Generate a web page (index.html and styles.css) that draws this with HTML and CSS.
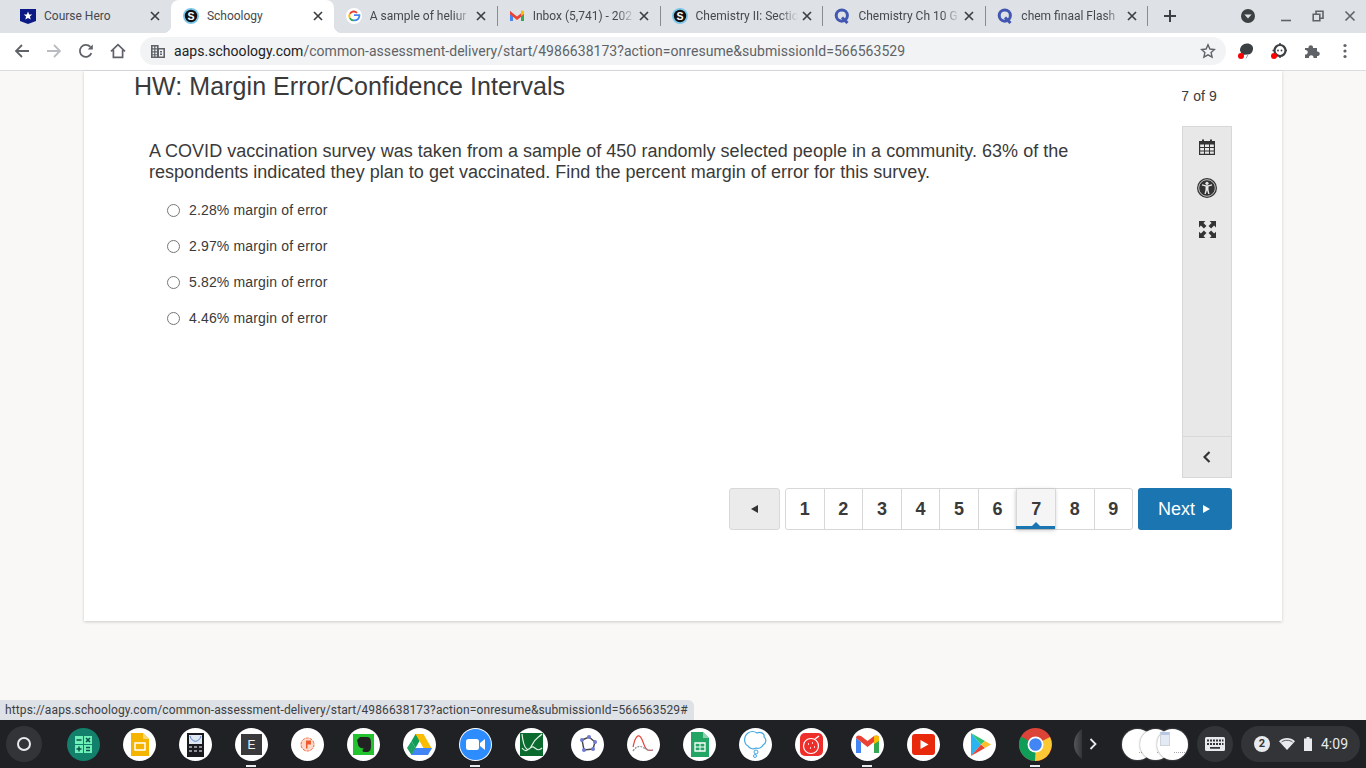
FILE: index.html
```html
<!DOCTYPE html>
<html lang="en">
<head>
    <meta charset="UTF-8">
    <title>Schoology</title>
    <link rel="stylesheet" href="styles.css">
</head>
<body>
    <svg class="defs" width="0" height="0">
        <symbol id="fav-q" viewBox="0 0 16 16">
            <circle cx="7.800" cy="7.600" r="5.600" fill="none" stroke="#4257b2" stroke-width="3"/>
            <path d="M8 9.500l5.500 5.500" stroke="#4257b2" stroke-width="3"/>
        </symbol>
        <symbol id="close" viewBox="0 0 10 10">
            <path d="M1 1l8 8M9 1l-8 8" stroke="#3c4043" stroke-width="1.700" fill="none"/>
        </symbol>
    </svg>

    <!-- browser chrome -->
    <div class="tabstrip">
        <div class="tab">
            <svg class="favicon" viewBox="0 0 16 16"><path d="M0 1h16v12l-8 3-8-3z" fill="#0b1a85"/><path d="M8 3.500l1.200 2.900 3 .2-2.300 2 .8 3L8 10l-2.700 1.600.8-3-2.300-2 3-.2z" fill="#fff"/></svg>
            <span class="tab-title short">Course Hero</span>
            <svg class="tab-close"><use href="#close"/></svg>
        </div>
        <div class="tab active">
            <svg class="favicon" viewBox="0 0 16 16"><circle cx="8" cy="8" r="8" fill="#7cc8ea"/><circle cx="8" cy="8" r="6.200" fill="#111"/><text x="8" y="11.600" font-family="Liberation Sans" font-weight="700" font-size="10.500" text-anchor="middle" fill="#fff">S</text></svg>
            <span class="tab-title short">Schoology</span>
            <svg class="tab-close"><use href="#close"/></svg>
        </div>
        <div class="tab">
            <svg class="favicon" viewBox="0 0 16 16">
                <circle cx="8" cy="8" r="8" fill="#fff"/>
                <path d="M8 7.100h5.400c.3 2.800-1.700 5.300-5.400 5.300" fill="none" stroke="#4285f4" stroke-width="1.900"/>
                <path d="M3.900 5.800A4.500 4.500 0 0 1 11 4.800" fill="none" stroke="#ea4335" stroke-width="1.900"/>
                <path d="M3.800 10.100a4.600 4.600 0 0 1 0-4.300" fill="none" stroke="#fbbc05" stroke-width="1.900"/>
                <path d="M3.800 10.100a4.500 4.500 0 0 0 4.200 2.300" fill="none" stroke="#34a853" stroke-width="1.900"/>
            </svg>
            <span class="tab-title">A sample of heliur</span>
            <svg class="tab-close"><use href="#close"/></svg>
        </div>
        <div class="tab sep">
            <svg class="favicon" viewBox="0 0 16 16">
                <path d="M1 3v10h3V6z" fill="#4285f4"/><path d="M12 6v7h3V3z" fill="#34a853"/>
                <path d="M1 3l7 5.500L15 3v3.500L8 12 1 6.500z" fill="#ea4335"/><path d="M12 2.600L15 3v3l-3 2z" fill="#fbbc05"/>
            </svg>
            <span class="tab-title">Inbox (5,741) - 202</span>
            <svg class="tab-close"><use href="#close"/></svg>
        </div>
        <div class="tab sep">
            <svg class="favicon" viewBox="0 0 16 16"><circle cx="8" cy="8" r="8" fill="#7cc8ea"/><circle cx="8" cy="8" r="6.200" fill="#111"/><text x="8" y="11.600" font-family="Liberation Sans" font-weight="700" font-size="10.500" text-anchor="middle" fill="#fff">S</text></svg>
            <span class="tab-title">Chemistry II: Sectio</span>
            <svg class="tab-close"><use href="#close"/></svg>
        </div>
        <div class="tab sep">
            <svg class="favicon"><use href="#fav-q"/></svg>
            <span class="tab-title">Chemistry Ch 10 G</span>
            <svg class="tab-close"><use href="#close"/></svg>
        </div>
        <div class="tab sep">
            <svg class="favicon"><use href="#fav-q"/></svg>
            <span class="tab-title">chem finaal Flash</span>
            <svg class="tab-close"><use href="#close"/></svg>
        </div>
        <div class="tab-end">
            <svg class="new-tab" viewBox="0 0 12 12"><path d="M6 0v12M0 6h12" stroke="#3c4043" stroke-width="2"/></svg>
        </div>
        <div class="win-controls">
            <svg class="win-profile" viewBox="0 0 14 14"><circle cx="7" cy="7" r="7" fill="#3c4043"/><path d="M3.400 5.400h7.200L7 9.600z" fill="#dee1e6"/></svg>
            <svg class="win-btn" viewBox="0 0 12 12"><path d="M1 10.500h10" stroke="#5f6368" stroke-width="1.600"/></svg>
            <svg class="win-btn" viewBox="0 0 12 12"><path d="M4 4V1.200h7v7H8M1.200 4.200h6.600v6.600H1.200z" fill="none" stroke="#5f6368" stroke-width="1.600"/></svg>
            <svg class="win-btn" viewBox="0 0 12 12"><path d="M1.500 1.500l9 9M10.500 1.500l-9 9" stroke="#5f6368" stroke-width="1.600"/></svg>
        </div>
    </div>

    <div class="toolbar">
        <svg class="nav-icon" viewBox="0 0 16 16"><path d="M15 8H2M8 2L2 8l6 6" fill="none" stroke="#5f6368" stroke-width="1.800"/></svg>
        <svg class="nav-icon" viewBox="0 0 16 16"><path d="M1 8h13M8 2l6 6-6 6" fill="none" stroke="#b9bcc0" stroke-width="1.800"/></svg>
        <svg class="nav-icon" viewBox="0 0 16 16"><path d="M13.400 10.200A6 6 0 1 1 12.400 3.900" fill="none" stroke="#5f6368" stroke-width="1.800"/><path d="M9.600 6.600h5.200V1.400z" fill="#5f6368"/></svg>
        <svg class="nav-icon" viewBox="0 0 16 16"><path d="M1 8.400L8 1.600l7 6.800M3.400 7v7.400h9.200V7" fill="none" stroke="#5f6368" stroke-width="1.700"/></svg>
        <div class="omnibox">
            <svg class="site-icon" viewBox="0 0 14 14"><path d="M0 1h7.600v3H14v10H0z" fill="#5f6368"/><path d="M1.600 2.600h1.600v1.600H1.600zM4.400 2.600H6v1.600H4.400zM1.600 5.600h1.600v1.600H1.600zM4.400 5.600H6v1.600H4.400zM1.600 8.600h1.600v1.600H1.600zM4.400 8.600H6v1.600H4.400zM1.600 11.200h1.600v1.400H1.600zM4.400 11.200H6v1.400H4.400zM8 5.600h4.400v7H8z" fill="#f1f3f4"/><path d="M9 7h2v1.400H9zM9 9.600h2V11H9z" fill="#5f6368"/></svg>
            <span class="url"><b>aaps.schoology.com</b>/common-assessment-delivery/start/4986638173?action=onresume&amp;submissionId=566563529</span>
            <svg class="star" viewBox="0 0 16 16"><path d="M8 1.800l1.900 4.200 4.600.5-3.400 3.100 1 4.500-4.100-2.300-4.100 2.300 1-4.500L1.500 6.500l4.600-.5z" fill="none" stroke="#5f6368" stroke-width="1.400"/></svg>
        </div>
        <div class="extensions">
            <svg class="ext" viewBox="0 0 16 16"><path d="M2 7.500C2 3.500 5 .5 9 .5c4 0 6.500 2.500 6 6-.5 3-2.500 5-5.500 5L4 12z" fill="#3c4043"/><path d="M8 15.500l2-4" stroke="#9aa0a6"/><circle cx="3" cy="13" r="3" fill="#f00"/></svg>
            <svg class="ext" viewBox="0 0 16 16"><circle cx="9" cy="7.500" r="5.500" fill="none" stroke="#3c4043" stroke-width="2.200"/><path d="M9 0v3M9 12v3M1.500 7.500h2.500M14 7.500h2" stroke="#3c4043" stroke-width="1.500"/><circle cx="7" cy="7.500" r=".9" fill="#3c4043"/><circle cx="10.500" cy="7.500" r=".9" fill="#3c4043"/><circle cx="3" cy="13" r="3" fill="#f00"/></svg>
            <svg class="ext" viewBox="0 0 16 16"><path d="M1 5h3.500a2.300 2.300 0 1 1 4.500 0H13v3.500a2.300 2.300 0 1 1 0 4.500V15H9.500a2.300 2.300 0 1 0-4.500 0H1v-3.500a2.300 2.300 0 1 0 0-4.500z" fill="#5f6368"/></svg>
            <svg class="ext" viewBox="0 0 16 16"><circle cx="8" cy="2.500" r="1.600" fill="#5f6368"/><circle cx="8" cy="8" r="1.600" fill="#5f6368"/><circle cx="8" cy="13.500" r="1.600" fill="#5f6368"/></svg>
        </div>
    </div>

    <!-- page -->
    <div class="page">
        <main class="card">
            <header class="card-head">
                <h1>HW: Margin Error/Confidence Intervals</h1>
                <span class="count">7 of 9</span>
            </header>

            <div class="work">
                <section class="question">
                    <p>A COVID vaccination survey was taken from a sample of 450 randomly selected people in a community. 63% of the respondents indicated they plan to get vaccinated. Find the percent margin of error for this survey.</p>
                    <div class="options">
                        <label class="option"><input type="radio" name="answer"><span>2.28% margin of error</span></label>
                        <label class="option"><input type="radio" name="answer"><span>2.97% margin of error</span></label>
                        <label class="option"><input type="radio" name="answer"><span>5.82% margin of error</span></label>
                        <label class="option"><input type="radio" name="answer"><span>4.46% margin of error</span></label>
                    </div>
                </section>
                <aside class="tools">
                    <div class="tool-list">
                        <svg class="tool" viewBox="0 0 16 16"><path d="M0 2h16v14H0z" fill="#333"/><path d="M3 .5h2v3H3zM11 .5h2v3h-2z" fill="#333"/><path d="M1.200 5.500h3.800v2.500H1.200zM6 5.500h4v2.500H6zM11 5.500h3.800v2.500H11zM1.200 9h3.800v2.500H1.200zM6 9h4v2.500H6zM11 9h3.800v2.500H11zM1.200 12.500h3.800v2.300H1.200zM6 12.500h4v2.300H6zM11 12.500h3.800v2.300H11z" fill="#e8e8e8"/></svg>
                        <svg class="tool access" viewBox="0 0 20 20"><circle cx="10" cy="10" r="10" fill="#333"/><circle cx="10" cy="10" r="8.300" fill="none" stroke="#e8e8e8" stroke-width=".8"/><circle cx="10" cy="5.300" r="1.600" fill="#e8e8e8"/><path d="M4.800 7.400L8.500 8.400v3.200L7.500 16h1.300l1.200-3.800 1.200 3.800h1.300l-1-4.400V8.400l3.700-1-.3-1.100-4 .9H9l-3.900-.9z" fill="#e8e8e8"/></svg>
                        <svg class="tool expand" viewBox="0 0 16 16"><path d="M0 0h6L4.200 1.800 7 4.600 4.600 7 1.800 4.200 0 6zM16 0v6l-1.800-1.800L11.400 7 9 4.600l2.800-2.800L10 0zM0 16v-6l1.800 1.800L4.600 9 7 11.400l-2.800 2.800L6 16zM16 16h-6l1.800-1.800L9 11.400 11.400 9l2.800 2.800L16 10z" fill="#333"/></svg>
                    </div>
                    <div class="tool-collapse">
                        <svg viewBox="0 0 8 12"><path d="M6.500 1L1.500 6l5 5" fill="none" stroke="#333" stroke-width="2.200"/></svg>
                    </div>
                </aside>
            </div>

            <nav class="pager">
                <button class="prev"><i class="arrow-left"></i></button>
                <div class="pages">
                    <a>1</a><a>2</a><a>3</a><a>4</a><a>5</a><a>6</a><a class="current">7</a><a>8</a><a>9</a>
                </div>
                <button class="next">Next<i class="arrow-right"></i></button>
            </nav>
        </main>
        <div class="status-bubble">https://aaps.schoology.com/common-assessment-delivery/start/4986638173?action=onresume&amp;submissionId=566563529#</div>
    </div>

    <!-- chromeos shelf -->
    <footer class="shelf">
        <div class="launcher"><i></i></div>
        <div class="apps">
            <div class="app"><svg viewBox="0 0 33 33"><circle cx="16.500" cy="16.500" r="16.500" fill="#12806a"/><path d="M8 8h8v8H8zM17 8h8v8h-8zM8 17h8v8H8zM17 17h8v8h-8z" fill="#6ff0b8"/><path d="M9.500 12h5M19 10l4 4M23 10l-4 4M12 18.500v5M9.500 21h5M19 19.500h4M19 22.500h4" stroke="#0d4f45" stroke-width="1.500"/></svg></div>
            <div class="app"><svg viewBox="0 0 33 33"><circle cx="16.500" cy="16.500" r="16.500" fill="#fff"/><path d="M8 5h12l6 6v17H8z" fill="#f4b400"/><path d="M20 5l6 6h-6z" fill="#f8d775"/><path d="M12 15h10v7H12z" fill="none" stroke="#fff" stroke-width="1.500"/></svg></div>
            <div class="app"><svg viewBox="0 0 33 33"><circle cx="16.500" cy="16.500" r="16.500" fill="#fff"/><path d="M8 5h17v24H8z" fill="#1b1b1f"/><path d="M10 7h13v9H10z" fill="#dfe8f2"/><path d="M11 8c2 7 9 7 11 0" fill="none" stroke="#5c86c4"/><path d="M10 18h3v2h-3zM15 18h3v2h-3zM20 18h3v2h-3zM10 22h3v2h-3zM15 22h3v2h-3zM20 22h3v2h-3z" fill="#8d9097"/></svg></div>
            <div class="app dot"><svg viewBox="0 0 33 33"><circle cx="16.500" cy="16.500" r="16.500" fill="#fff"/><path d="M6 6h21v21H6z" fill="#3a3a3c"/><text x="16.500" y="21" font-family="Liberation Sans" font-size="12" text-anchor="middle" fill="#eee">E</text></svg></div>
            <div class="app"><svg viewBox="0 0 33 33"><circle cx="16.500" cy="16.500" r="16.500" fill="#fff"/><circle cx="16.500" cy="16.500" r="6.500" fill="#fbd9cb" stroke="#ef6a3f" stroke-dasharray="3 1"/><path d="M15 12.500h5v4h-3.500v4H15z" fill="#ef5a2e"/></svg></div>
            <div class="app"><svg viewBox="0 0 33 33"><circle cx="16.500" cy="16.500" r="16.500" fill="#fff"/><path d="M6 6h21v21H6z" fill="#22c32f"/><path d="M10 12l3-3h7c4 0 4 3 4 8 0 5-1 7-4 7h-3c-2 0-2-3 0-3h1c-3-1-7-1-7-5z" fill="#222"/></svg></div>
            <div class="app"><svg viewBox="0 0 33 33"><circle cx="16.500" cy="16.500" r="16.500" fill="#fff"/><path d="M12.500 6h8l-8 14-4-7z" fill="#0f9d58"/><path d="M12.500 6h8l8.500 15h-8z" fill="#fbbc04"/><path d="M12 20h17l-4 7H8z" fill="#4285f4"/><path d="M4 20l4.500-7 4 7-4 7z" fill="#1ea362"/></svg></div>
            <div class="app dot"><svg viewBox="0 0 33 33"><circle cx="16.500" cy="16.500" r="16.500" fill="#fff"/><circle cx="16.500" cy="16.500" r="15.500" fill="#2d8cff"/><rect x="7" y="11" width="13" height="11" rx="2.500" fill="#fff"/><path d="M21 15l5-4v11l-5-4z" fill="#fff"/></svg></div>
            <div class="app"><svg viewBox="0 0 33 33"><circle cx="16.500" cy="16.500" r="16.500" fill="#fff"/><path d="M5 5h23v23H5z" fill="#0b6b2e"/><path d="M7 6c2 18 7 18 10 11s6-7 10-11M7 20c4 6 7 0 10-1s5 6 10 1" fill="none" stroke="#e6f2ea" stroke-width="1.200"/></svg></div>
            <div class="app"><svg viewBox="0 0 33 33"><circle cx="16.500" cy="16.500" r="16.500" fill="#fff"/><path d="M11 12l7-3 6 5-2 7-9 1z" fill="none" stroke="#444" stroke-width="1.400"/><g fill="#6f7bd1"><circle cx="11" cy="12" r="2"/><circle cx="18" cy="9" r="2"/><circle cx="24" cy="14" r="2"/><circle cx="22" cy="21" r="2"/><circle cx="13" cy="22" r="2"/></g></svg></div>
            <div class="app"><svg viewBox="0 0 33 33"><circle cx="16.500" cy="16.500" r="16.500" fill="#fff"/><path d="M6 19c3-14 7-14 10-5s5 9 10 8" fill="none" stroke="#e8443a" stroke-width="1.200"/><path d="M6 23c4-6 8-5 11-3s6 3 9 2" fill="none" stroke="#8a8f98" stroke-width="1.200" stroke-dasharray="2 1"/></svg></div>
            <div class="app"><svg viewBox="0 0 33 33"><circle cx="16.500" cy="16.500" r="16.500" fill="#fff"/><path d="M8 4h12l6 6v19H8z" fill="#23a566"/><path d="M20 4l6 6h-6z" fill="#8ed1b1"/><path d="M12 15h10v8H12z" fill="none" stroke="#fff" stroke-width="1.300"/><path d="M12 19h10M17 15v8" stroke="#fff"/></svg></div>
            <div class="app"><svg viewBox="0 0 33 33"><circle cx="16.500" cy="16.500" r="16.500" fill="#fff"/><path d="M9 5c3-2 6-2 9 0 4-2 8 1 7 4 3 2 2 7-1 8-1 3-5 4-7 3-3 2-7 0-8-2C5 16 4 9 9 5z" fill="none" stroke="#45a8e0" stroke-width="1.200"/><circle cx="17" cy="24" r="2" fill="none" stroke="#45a8e0"/><circle cx="16" cy="28" r="1.500" fill="none" stroke="#45a8e0"/></svg></div>
            <div class="app"><svg viewBox="0 0 33 33"><circle cx="16.500" cy="16.500" r="16.500" fill="#fff"/><rect x="5" y="5" width="23" height="23" rx="5" fill="#ee2e2b"/><circle cx="16" cy="18" r="7.500" fill="none" stroke="#fff" stroke-width="1.200"/><path d="M20 11l4-3M13 16h1M17 15h1M15 20h1M19 19h1" stroke="#fff" stroke-width="1.500"/></svg></div>
            <div class="app dot"><svg viewBox="0 0 33 33"><circle cx="16.500" cy="16.500" r="16.500" fill="#fff"/><path d="M5 10v15h5V14z" fill="#4285f4"/><path d="M23 14v11h5V10z" fill="#34a853"/><path d="M5 10c0-3 3-3 5-2l6.500 5L23 8c2-1 5-1 5 2l-11.500 9z" fill="#ea4335"/><path d="M23 8c2-1 5-1 5 2v3l-5 3z" fill="#fbbc04"/></svg></div>
            <div class="app"><svg viewBox="0 0 33 33"><circle cx="16.500" cy="16.500" r="16.500" fill="#fff"/><rect x="5" y="6" width="23" height="21" rx="3" fill="#e8290b"/><path d="M13.500 12l8 4.500-8 4.500z" fill="#fff"/></svg></div>
            <div class="app"><svg viewBox="0 0 33 33"><circle cx="16.500" cy="16.500" r="16.500" fill="#fff"/><path d="M8 5l10 11.500L8 28z" fill="#2bb5f0"/><path d="M8 5l14 8-4 3.500z" fill="#31c46f"/><path d="M8 28l14-8-4-3.500z" fill="#ea4335"/><path d="M22 13l6 3.500-6 3.500-4-3.500z" fill="#fbc02d"/></svg></div>
            <div class="app dot"><svg viewBox="0 0 33 33"><circle cx="16.500" cy="16.500" r="16.500" fill="#db4437"/><path d="M16.500 16.500L31 9a16.500 16.500 0 0 1-15 24z" fill="#fcc934"/><path d="M16.500 16.500L16 33A16.500 16.500 0 0 1 2 8.500z" fill="#0f9d58"/><circle cx="16.500" cy="16.500" r="8" fill="#fff"/><circle cx="16.500" cy="16.500" r="6.300" fill="#4285f4"/></svg></div>
        </div>
        <div class="overflow"><svg viewBox="0 0 8 12"><path d="M1.500 1l5 5-5 5" fill="none" stroke="#e8eaed" stroke-width="1.800"/></svg></div>
        <div class="thumbs"><i></i><i></i><i></i><b class="thumb-doc"></b></div>
        <div class="keyboard">
            <svg viewBox="0 0 20 14"><path d="M0 1.500A1.500 1.500 0 0 1 1.500 0h17A1.500 1.500 0 0 1 20 1.500v11a1.500 1.500 0 0 1-1.500 1.500h-17A1.500 1.500 0 0 1 0 12.500z" fill="#e8eaed"/><path d="M2 2.500h2v2H2zM5 2.500h2v2H5zM8 2.500h2v2H8zM11 2.500h2v2h-2zM14 2.500h2v2h-2zM17 2.500h1.500v2H17zM2 6h2v2H2zM5 6h2v2H5zM8 6h2v2H8zM11 6h2v2h-2zM14 6h2v2h-2zM17 6h1.500v2H17zM5 10h10v1.800H5z" fill="#32343a"/></svg>
        </div>
        <div class="tray">
            <span class="badge">2</span>
            <svg class="wifi" viewBox="0 0 16 12"><path d="M0 3.200C4.500-1 11.500-1 16 3.200L8 12z" fill="#e8eaed"/><path d="M2.500 4C5.500 1.700 10.500 1.700 13.500 4" fill="none" stroke="#323437" stroke-width=".8"/></svg>
            <svg class="battery" viewBox="0 0 8 14"><path d="M2.500 0h3v1.500H8V14H0V1.500h2.500z" fill="#e8eaed"/></svg>
            <span class="clock">4:09</span>
        </div>
    </footer>
</body>
</html>
```

FILE: styles.css
```css
* { box-sizing: border-box; margin: 0; padding: 0; }
html, body { height: 100%; }
body { width: 1366px; height: 768px; overflow: hidden; display: flex; flex-direction: column; background: #f9f8f6; font-family: "Liberation Sans", sans-serif; color: #3a3a3a; }
.defs { position: absolute; }

/* --- tabs --- */
.tabstrip { height: 33px; flex: none; display: flex; padding-left: 8px; background: #dee1e6; font-family: Roboto, sans-serif; font-size: 12px; color: #45494e; }
.tab { position: relative; width: 162.900px; height: 33px; flex: none; display: flex; align-items: center; padding: 0 0 2px 12px; }
.tab.active { background: #fff; border-radius: 8px 8px 0 0; }
.tab.active::before, .tab.active::after { content: ""; position: absolute; bottom: 0; width: 8px; height: 8px; }
.tab.active::before { left: -8px; background: radial-gradient(circle at 0 0, transparent 8px, #fff 8.500px); }
.tab.active::after { right: -8px; background: radial-gradient(circle at 100% 0, transparent 8px, #fff 8.500px); }
.tab.sep::before { content: ""; position: absolute; left: 0; top: 6px; width: 1px; height: 20px; background: #888b90; }
.favicon { width: 16px; height: 16px; flex: none; margin-right: 8px; }
.tab-title { width: 102px; flex: none; white-space: nowrap; -webkit-mask-image: linear-gradient(to right, #000 82%, transparent 100%); mask-image: linear-gradient(to right, #000 82%, transparent 100%); }
.tab-title.short { -webkit-mask-image: none; mask-image: none; }
.tab-close { width: 10px; height: 10px; flex: none; margin-left: 4px; }
.tab-end { width: 52px; flex: none; position: relative; display: flex; align-items: center; padding-left: 16px; }
.tab-end::before { content: ""; position: absolute; left: -1px; top: 6px; width: 1px; height: 20px; background: #888b90; }
.new-tab { width: 12px; height: 12px; margin-top: -2px; }
.win-controls { display: flex; align-items: center; margin-left: 41px; }
.win-profile { width: 14px; height: 14px; margin-right: 25px; margin-top: -1px; }
.win-btn { width: 12px; height: 12px; margin-right: 20px; margin-top: -1px; }
.win-btn:last-child { margin-right: 0; }

/* --- toolbar --- */
.toolbar { height: 38px; flex: none; display: flex; align-items: center; padding: 0 0 1px 14px; background: #fff; border-bottom: 1px solid #dadce0; }
.nav-icon { width: 16px; height: 16px; margin-right: 16px; }
.omnibox { width: 1086px; height: 28px; margin-left: -2px; display: flex; align-items: center; padding: 0 10px 0 11px; border-radius: 14px; background: #f1f3f4; font-family: Roboto, sans-serif; font-size: 14px; letter-spacing: .04px; color: #5f6368; }
.site-icon { width: 14px; height: 14px; margin-right: 9px; flex: none; }
.url { flex: 1; white-space: nowrap; }
.url b { font-weight: 400; color: #202124; }
.star { width: 16px; height: 16px; }
.extensions { display: flex; margin-left: 12px; gap: 17px; }
.ext { width: 16px; height: 16px; }

/* --- card --- */
.page { position: relative; flex: 1; }
.card { width: 1198px; height: 550px; margin-left: 84px; padding: 1px 50px 0; display: flex; flex-direction: column; background: #fff; box-shadow: 0 1px 3px rgba(0, 0, 0, .18); }
.card-head { height: 54px; display: flex; justify-content: space-between; padding-right: 15px; }
.card-head h1 { font-size: 25px; font-weight: 400; line-height: 28px; letter-spacing: .06px; }
.count { margin-top: 16px; font-size: 14px; line-height: 16px; letter-spacing: .1px; }
.work { display: flex; height: 352px; justify-content: space-between; }
.question { width: 960px; padding: 15px 0 0 15px; }
.question p { font-size: 18px; line-height: 21px; width: 945px; letter-spacing: .02px; }
.options { margin-top: 9px; padding-left: 18px; }
.option { height: 36px; display: flex; align-items: center; gap: 9px; font-size: 14px; letter-spacing: .15px; }
.option input { width: 13px; height: 13px; margin: 0; }

.tools { width: 50px; display: flex; flex-direction: column; justify-content: space-between; background: #e8e8e8; border: 1px solid #d8d8d8; }
.tool-list { display: flex; flex-direction: column; align-items: center; gap: 21px; padding-top: 12px; }
.tool { width: 16px; height: 16px; flex: none; margin: 0 0 4px; }
.tool.access { width: 20px; height: 20px; margin: -2px 0 2px; }
.tool.expand { width: 17px; height: 17px; }
.tool-collapse { height: 41px; display: flex; align-items: center; justify-content: center; border-top: 1px solid #d8d8d8; }
.tool-collapse svg { width: 8px; height: 12px; }

/* --- pager --- */
.pager { display: flex; justify-content: flex-end; margin-top: 10px; height: 42px; }
.prev { width: 51px; display: flex; align-items: center; justify-content: center; background: #ebebeb; border: 1px solid #d8d8d8; border-radius: 3px; margin-right: 5px; }
.arrow-left { border: 4px solid transparent; border-left: 0; border-right: 7px solid #333; }
.pages { display: flex; width: 348px; background: #fff; border: 1px solid #d8d8d8; border-radius: 3px; }
.pages a { position: relative; flex: 1; display: flex; align-items: center; justify-content: center; font-size: 18px; font-weight: 700; border-left: 1px solid #d8d8d8; }
.pages a:first-child { border-left: 0; }
.pages a.current { background: #f5f5f5; box-shadow: 0 1px 4px rgba(0, 0, 0, .25); }
.pages a.current::after { content: ""; position: absolute; left: -1px; right: 0; bottom: 0; height: 3px; background: #1a75b0; }
.pages a.current::before { content: ""; position: absolute; left: 50%; bottom: 3px; margin-left: -4px; border: 4px solid transparent; border-top: 0; border-bottom: 4px solid #1a75b0; }
.next { width: 94px; margin-left: 5px; padding-right: 2px; display: flex; align-items: center; justify-content: center; gap: 8px; background: #1a75b0; color: #fff; border: 0; border-radius: 3px; font-family: "Liberation Sans", sans-serif; font-size: 18px; }
.arrow-right { border: 4px solid transparent; border-right: 0; border-left: 7px solid #fff; }

.status-bubble { position: absolute; left: 0; bottom: 0; width: 694px; height: 20px; padding-left: 5px; line-height: 20px; background: #dee1e6; border-radius: 0 6px 0 0; font-family: Roboto, sans-serif; font-size: 12px; letter-spacing: .12px; color: #3c4043; white-space: nowrap; }

/* --- shelf --- */
.shelf { height: 48px; flex: none; display: flex; align-items: center; padding-left: 6px; background: #1f2125; }
.launcher { width: 36px; height: 36px; margin-right: 13px; display: flex; align-items: center; justify-content: center; border-radius: 50%; background: #323437; }
.launcher i { width: 14px; height: 14px; border: 2px solid #e8eaed; border-radius: 50%; }
.apps { display: flex; }
.app { position: relative; width: 56px; height: 48px; display: flex; align-items: center; justify-content: center; }
.app svg { width: 33px; height: 33px; }
.app.dot::after { content: ""; position: absolute; left: 23px; bottom: 1px; width: 10px; height: 2px; background: #e8eaed; }
.overflow { width: 36px; height: 36px; margin-left: 11px; display: flex; align-items: center; justify-content: center; border-radius: 50%; background: linear-gradient(to right, #55575b 0, #323437 8px, transparent 8px); }
.overflow svg { width: 8px; height: 12px; margin-left: 2px; }
.thumbs { width: 66px; height: 31px; margin-left: 12px; position: relative; display: flex; }
.thumbs i { position: relative; width: 31px; flex: none; height: 31px; margin-right: -13.500px; border-radius: 50%; background: #fff; box-shadow: 0 0 2px #777; }
.thumbs i:last-of-type { margin-right: 0; }
.thumbs i::after { content: ""; position: absolute; left: 17px; width: 11px; top: 23px; border-top: 1px dotted #a6a8ac; }
.thumb-doc { position: absolute; left: 38px; top: 3px; width: 10px; height: 14px; background: #e4eaf3; border: 1px solid #cfd3da; border-top: 3px solid #b9c9e4; }
.keyboard { width: 36px; height: 36px; margin-left: 9px; display: flex; align-items: center; justify-content: center; border-radius: 50%; background: #323437; }
.keyboard svg { width: 20px; height: 14px; }
.tray { width: 119px; height: 36px; margin-left: 8px; display: flex; align-items: center; padding-left: 13px; border-radius: 18px; background: #323437; font-family: Roboto, sans-serif; color: #e8eaed; }
.badge { width: 16px; height: 16px; margin-right: 9px; border-radius: 50%; background: #e8eaed; color: #323437; font-size: 11px; font-weight: 700; line-height: 16px; text-align: center; }
.wifi { width: 16px; height: 12px; margin-right: 9px; }
.battery { width: 8px; height: 14px; margin-right: 9px; }
.clock { font-size: 14px; }
```
